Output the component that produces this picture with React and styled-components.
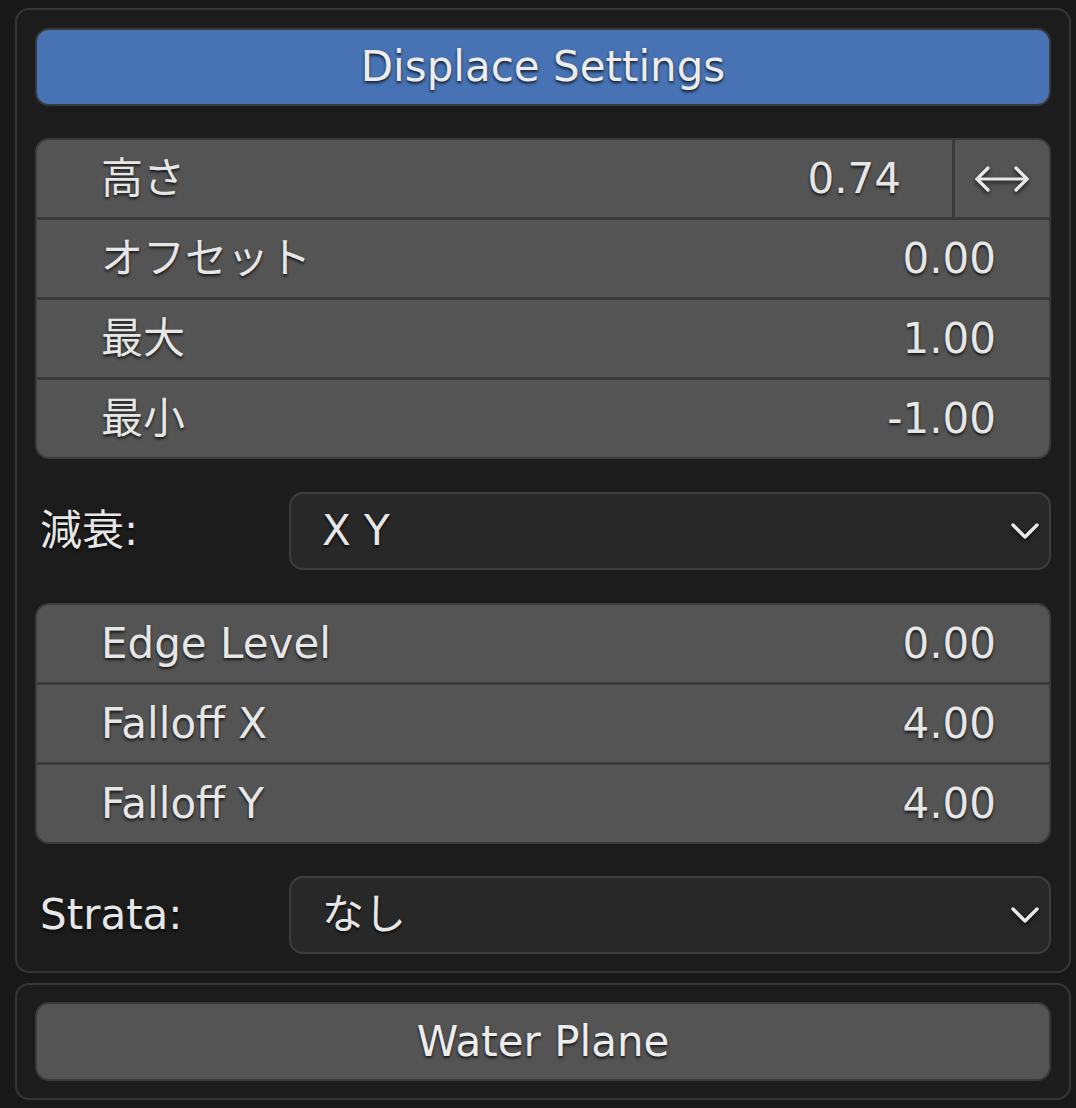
import React from "react";
import { styled, createGlobalStyle } from "styled-components";

const Global = createGlobalStyle`
  html, body {
    margin: 0;
    padding: 0;
    background: #181818;
  }
  body {
    font-family: "DejaVu Sans", "Noto Sans CJK JP", sans-serif;
    color: #e6e6e6;
  }
  * {
    box-sizing: border-box;
  }
`;

const Page = styled.div`
  width: 1076px;
  height: 1108px;
  padding: 8px 0 0 15px;
  display: flex;
  flex-direction: column;
  gap: 10px;
  background: #181818;
`;

const Panel = styled.section`
  width: 1056px;
  border: 2px solid #353535;
  border-radius: 14px;
  background: #1c1c1c;
  padding: ${(p) => (p.$tight ? "17px 18px" : "18px 18px 17px")};
  display: flex;
  flex-direction: column;
`;

const Text = styled.span`
  font-size: 42px;
  line-height: 1;
  white-space: nowrap;
  text-shadow: 0 2px 3px rgba(0, 0, 0, 0.75);
`;

const Button = styled.div`
  height: ${(p) => p.$h}px;
  border: 2px solid #3a3a3a;
  border-radius: 14px;
  background: ${(p) => (p.$active ? "#4772b3" : "#545454")};
  display: flex;
  align-items: center;
  justify-content: center;
  color: #ececec;
`;

const Group = styled.div`
  margin-top: ${(p) => p.$mt}px;
  border: 2px solid #3b3b3b;
  border-radius: 14px;
  overflow: hidden;
  background: #3b3b3b;
  display: flex;
  flex-direction: column;
  gap: 3px;
`;

const Row = styled.div`
  height: 77px;
  background: #545454;
  display: flex;
  align-items: stretch;
`;

const Field = styled.div`
  flex: 1;
  display: flex;
  align-items: center;
  justify-content: space-between;
  padding: 0 ${(p) => p.$pr}px 0 64px;
`;

const SideCell = styled.div`
  width: 97px;
  border-left: 3px solid #3b3b3b;
  display: flex;
  align-items: center;
  justify-content: center;
`;

const SelectRow = styled.div`
  margin-top: ${(p) => p.$mt}px;
  display: grid;
  grid-template-columns: 254px 1fr;
  align-items: center;
`;

const Label = styled(Text)`
  padding-left: 5px;
`;

const Select = styled.div`
  height: 78px;
  border: 2px solid #3d3d3d;
  border-radius: 14px;
  background: #282828;
  display: flex;
  align-items: center;
  justify-content: space-between;
  padding: 0 10px 0 31px;
`;

const Icon = styled.svg`
  display: block;
  overflow: visible;
  filter: drop-shadow(0 2px 2px rgba(0, 0, 0, 0.7));
`;

const ArrowsIcon = () => (
  <Icon width="56" height="30" viewBox="0 0 56 30">
    <g fill="none" stroke="#e8e8e8" strokeWidth="3.2" strokeLinecap="round" strokeLinejoin="round">
      <path d="M3 15 H53" />
      <path d="M14 4 L3 15 L14 26" />
      <path d="M42 4 L53 15 L42 26" />
    </g>
  </Icon>
);

const Chevron = () => (
  <Icon width="28" height="18" viewBox="0 0 28 18">
    <path d="M2 3 L14 15 L26 3" fill="none" stroke="#e8e8e8" strokeWidth="3.4" strokeLinecap="round" strokeLinejoin="round" />
  </Icon>
);

const groupOne = [
  { label: "高さ", value: "0.74", side: true },
  { label: "オフセット", value: "0.00" },
  { label: "最大", value: "1.00" },
  { label: "最小", value: "-1.00" },
];

const groupTwo = [
  { label: "Edge Level", value: "0.00" },
  { label: "Falloff X", value: "4.00" },
  { label: "Falloff Y", value: "4.00" },
];

function Fields({ items, mt }) {
  return (
    <Group $mt={mt}>
      {items.map((it) => (
        <Row key={it.label}>
          <Field $pr={it.side ? 51 : 53}>
            <Text>{it.label}</Text>
            <Text>{it.value}</Text>
          </Field>
          {it.side && (
            <SideCell>
              <ArrowsIcon />
            </SideCell>
          )}
        </Row>
      ))}
    </Group>
  );
}

function Dropdown({ label, value, mt }) {
  return (
    <SelectRow $mt={mt}>
      <Label>{label}</Label>
      <Select>
        <Text>{value}</Text>
        <Chevron />
      </Select>
    </SelectRow>
  );
}

export default function App() {
  return (
    <>
      <Global />
      <Page>
        <Panel>
          <Button $active $h={78}>
            <Text>Displace Settings</Text>
          </Button>
          <Fields items={groupOne} mt={32} />
          <Dropdown label="減衰:" value="X Y" mt={33} />
          <Fields items={groupTwo} mt={33} />
          <Dropdown label="Strata:" value="なし" mt={32} />
        </Panel>
        <Panel $tight>
          <Button $h={79}>
            <Text>Water Plane</Text>
          </Button>
        </Panel>
      </Page>
    </>
  );
}
